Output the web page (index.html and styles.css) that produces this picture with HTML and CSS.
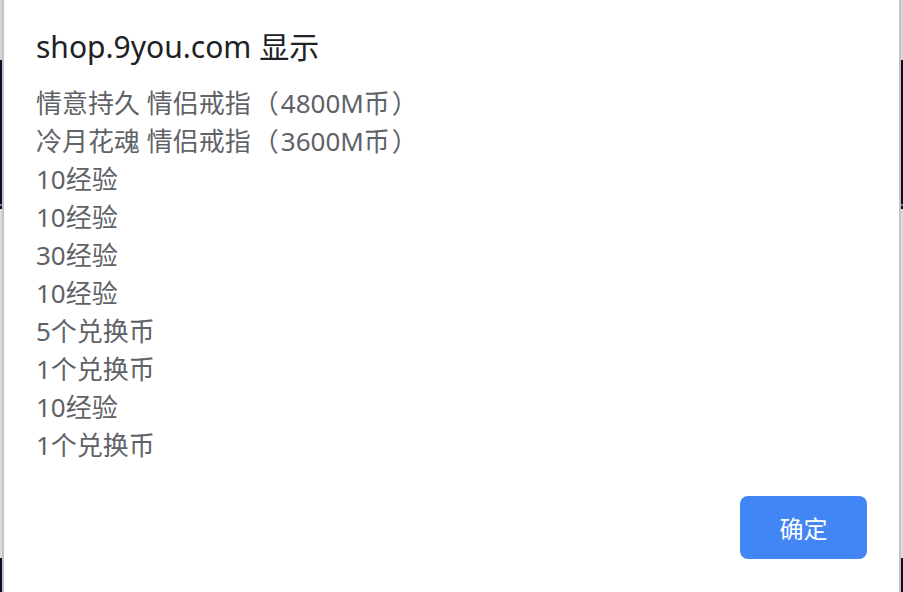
FILE: index.html
```html
<!DOCTYPE html>
<html lang="zh-CN">
<head>
<meta charset="utf-8">
<title>shop.9you.com 显示</title>
<link rel="stylesheet" href="styles.css">
</head>
<body>
<div class="page">
  <div class="dialog">
    <div class="title">shop.9you.com 显示</div>
    <div class="message">
      <div class="line">情意持久 情侣戒指<span class="paren">（</span>4800M币<span class="paren">）</span></div>
      <div class="line">冷月花魂 情侣戒指<span class="paren">（</span>3600M币<span class="paren">）</span></div>
      <div class="line">10经验</div>
      <div class="line">10经验</div>
      <div class="line">30经验</div>
      <div class="line">10经验</div>
      <div class="line">5个兑换币</div>
      <div class="line">1个兑换币</div>
      <div class="line">10经验</div>
      <div class="line">1个兑换币</div>
    </div>
    <div class="actions">
      <button class="ok">确定</button>
    </div>
  </div>
</div>
</body>
</html>
```
FILE: styles.css
```css
html, body {
  margin: 0;
  padding: 0;
  height: 100%;
  overflow: hidden;
}

.page {
  height: 592px;
  display: flex;
  background:
    linear-gradient(to bottom,
      #d6d6d6 0px, #d6d6d6 60px,
      #150a2c 60px, #150a2c 204px,
      #6f7aa8 204px, #6f7aa8 206px,
      #150a2c 206px, #150a2c 209px,
      #dcdcdc 209px, #dcdcdc 558px,
      #150a2c 558px, #150a2c 592px);
}

.dialog {
  flex: 1;
  margin: 0 2px 0 2px;
  border-left: 2px solid #c4c4c4;
  border-right: 2px solid #c4c4c4;
  background: #ffffff;
  padding: 28px 32px 0 32px;
  display: flex;
  flex-direction: column;
  font-family: "Noto Sans", "Noto Sans CJK SC", sans-serif;
}

.title {
  font-size: 30px;
  line-height: 38px;
  color: #202124;
  margin-bottom: 18px;
}

.message {
  font-family: "Noto Sans", "Noto Sans CJK SC", sans-serif;
  font-size: 26px;
  line-height: 38px;
  color: #5f6368;
  text-spacing-trim: space-all;
}

.paren {
  display: inline-block;
  width: 26px;
  text-align: center;
  margin: 0 2px;
}

.actions {
  display: flex;
  justify-content: flex-end;
  margin-top: 32px;
}

.ok {
  width: 127px;
  height: 63px;
  border: none;
  border-radius: 8px;
  background: #4285f4;
  color: #ffffff;
  font-family: "Noto Sans CJK SC", sans-serif;
  font-size: 24px;
  padding: 0;
}
```
